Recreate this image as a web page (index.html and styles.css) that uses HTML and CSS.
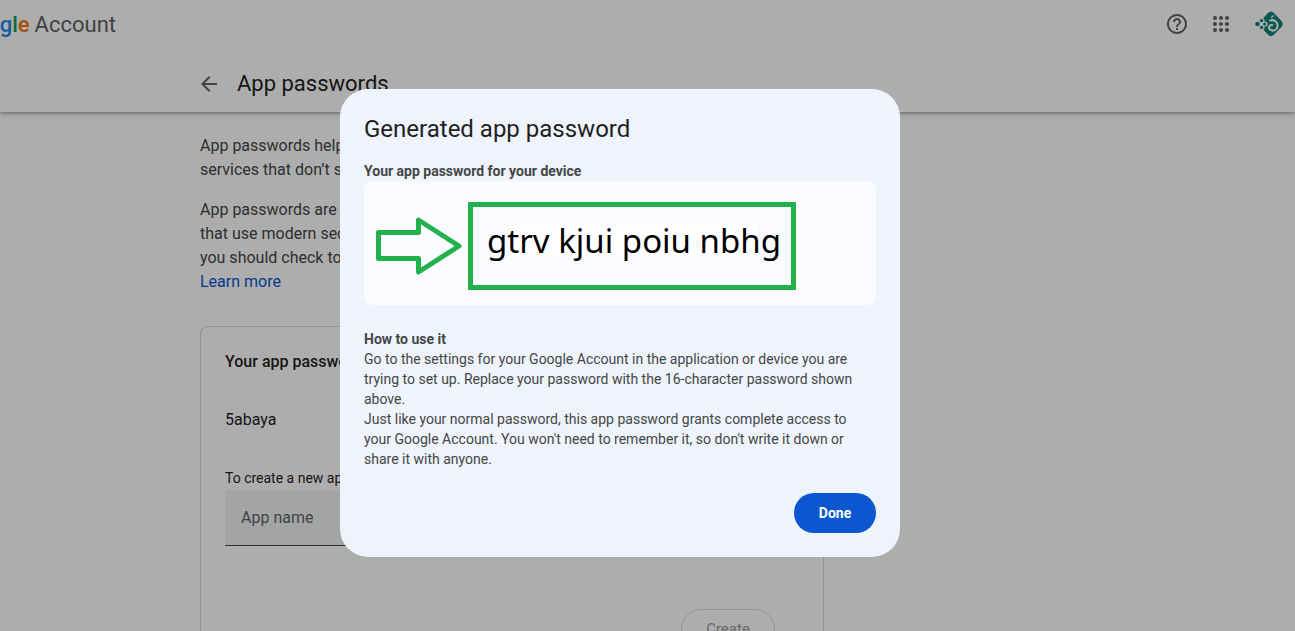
FILE: index.html
```html
<!DOCTYPE html>
<html lang="en">
<head>
  <meta charset="UTF-8">
  <meta name="viewport" content="width=device-width, initial-scale=1.0">
  <title>App passwords</title>
  <link rel="stylesheet" href="styles.css">
</head>
<body>
  <header>
    <div class="topbar">
      <div class="brand">
        <span class="logo"><span class="yellow">o</span><span class="blue">g</span><span class="green">l</span><span class="orange">e</span></span>
        <span>Account</span>
      </div>
      <div class="top-icons">
        <button class="icon-btn" aria-label="Help">
          <svg width="24" height="24" viewBox="0 0 24 24" fill="#5f6368"><path d="M11 18h2v-2h-2v2zm1-16C6.480 2 2 6.480 2 12s4.480 10 10 10 10-4.480 10-10S17.520 2 12 2zm0 18c-4.410 0-8-3.590-8-8s3.590-8 8-8 8 3.590 8 8-3.590 8-8 8zm0-14c-2.210 0-4 1.790-4 4h2c0-1.100.9-2 2-2s2 .9 2 2c0 2-3 1.750-3 5h2c0-2.250 3-2.500 3-5 0-2.210-1.790-4-4-4z"/></svg>
        </button>
        <button class="icon-btn" aria-label="Google apps">
          <svg width="24" height="24" viewBox="0 0 24 24" fill="#5f6368"><circle cx="6" cy="6" r="2"/><circle cx="12" cy="6" r="2"/><circle cx="18" cy="6" r="2"/><circle cx="6" cy="12" r="2"/><circle cx="12" cy="12" r="2"/><circle cx="18" cy="12" r="2"/><circle cx="6" cy="18" r="2"/><circle cx="12" cy="18" r="2"/><circle cx="18" cy="18" r="2"/></svg>
        </button>
        <button class="icon-btn" aria-label="Profile">
          <svg width="32" height="32" viewBox="0 0 32 32">
            <path d="M15 5Q18 2 21 5L28.500 13Q31 16 28.500 19L21 26.500Q18 30 15 26.500L8.500 20L12 16L8.500 12Z" fill="#0e8478"/>
            <circle cx="4.500" cy="16" r="2.300" fill="#0e8478"/>
            <circle cx="8.700" cy="12.600" r="2.800" fill="#fff"/>
            <circle cx="8.700" cy="19.400" r="2.800" fill="#fff"/>
            <circle cx="12" cy="16" r="2.600" fill="#fff"/>
            <g fill="#0e8478"><circle cx="8.600" cy="12.600" r="1.700"/><circle cx="8.600" cy="19.400" r="1.700"/><circle cx="11.600" cy="16" r="1.500"/></g>
            <path d="M17.500 12.500C22 11 25 14.500 24.500 18.500C24 22.500 19 24 16.500 21C15 18.500 17 16.300 20 17.300" fill="none" stroke="#fff" stroke-width="2"/>
            <path d="M18 9.500l3-2M16 13l4-2" stroke="#fff" stroke-width="1.300"/>
          </svg>
        </button>
      </div>
    </div>
    <div class="title-row">
      <a href="#" class="back" aria-label="Back">
        <svg width="24" height="24" viewBox="0 0 24 24" fill="#5f6368"><path d="M20 11H7.830l5.590-5.590L12 4l-8 8 8 8 1.410-1.410L7.830 13H20v-2z"/></svg>
      </a>
      <h1>App passwords</h1>
    </div>
  </header>

  <main>
    <p>App passwords help you sign into your Google Account on older apps and<br>services that don’t support modern security standards.</p>
    <p>App passwords are less secure than using up-to-date apps and services<br>that use modern security standards. Before you create an app password,<br>you should check to see if your app needs this in order to sign in.<br><a href="#">Learn more</a></p>

    <section class="card">
      <h2>Your app passwords</h2>
      <div class="app-item">5abaya</div>
      <label for="appname">To create a new app specific password, type a name for it below…</label>
      <input type="text" id="appname" placeholder="App name">
      <div class="card-actions">
        <button class="create-btn" disabled>Create</button>
      </div>
    </section>
  </main>

  <div class="overlay">
    <div class="dialog" role="dialog" aria-labelledby="dialog-title">
      <h2 id="dialog-title">Generated app password</h2>
      <h3>Your app password for your device</h3>
      <div class="pw-panel">
        <svg class="arrow" width="86" height="58" viewBox="0 0 86 58"><path d="M2.500 15.500H42.500V3L83 29L42.500 55V41.500H2.500Z" fill="none" stroke="#22b14c" stroke-width="5" stroke-linejoin="round"/></svg>
        <div class="pw-box"><span>gtrv kjui poiu nbhg</span></div>
      </div>
      <h3>How to use it</h3>
      <div class="help-text">
        Go to the settings for your Google Account in the application or device you are<br>
        trying to set up. Replace your password with the 16-character password shown<br>
        above.<br>
        Just like your normal password, this app password grants complete access to<br>
        your Google Account. You won't need to remember it, so don't write it down or<br>
        share it with anyone.
      </div>
      <div class="dialog-actions">
        <button class="done-btn">Done</button>
      </div>
    </div>
  </div>
</body>
</html>
```
FILE: styles.css
```css
* {
  box-sizing: border-box;
}
body {
  margin: 0;
  height: 100vh;
  overflow: hidden;
  font-family: Roboto, "Liberation Sans", sans-serif;
  font-size: 16px;
  line-height: 24px;
  color: #444746;
  background-color: #fff;
}
h1, h2, h3, p {
  margin: 0;
  font-weight: 400;
}
button {
  font-family: inherit;
  cursor: pointer;
}
header {
  height: 112px;
  box-shadow: 0 1px 3px rgba(60, 64, 67, 0.4), 0 2px 6px rgba(60, 64, 67, 0.2);
}
.topbar {
  display: flex;
  justify-content: space-between;
  align-items: center;
  height: 48px;
  padding-right: 10px;
}
.brand {
  display: flex;
  justify-content: flex-end;
  gap: 5px;
  width: 116px;
  padding-top: 2px;
  overflow: hidden;
  font-size: 22px;
  line-height: 32px;
  color: #5f6368;
}
.logo {
  font-weight: 500;
}
.blue { color: #1a88f0; }
.yellow { color: #fbbc05; }
.green { color: #0f9d58; }
.orange { color: #f07a13; }
.top-icons {
  display: flex;
  align-items: center;
  gap: 20px;
}
.icon-btn {
  display: flex;
  padding: 0;
  border: none;
  background: none;
}
.title-row {
  display: flex;
  align-items: center;
  gap: 16px;
  height: 64px;
  padding: 8px 0 0 197px;
}
.back {
  display: flex;
}
.title-row h1 {
  font-size: 22px;
  line-height: 32px;
  color: #1f1f1f;
}
main {
  width: 624px;
  margin-left: 200px;
  padding-top: 22px;
}
main p {
  margin-bottom: 16px;
}
a {
  color: #0b57d0;
  text-decoration: none;
}
.card {
  margin-top: 32px;
  padding: 23px 24px;
  border: 1px solid #d5d7d6;
  border-radius: 8px;
}
.card h2 {
  font-size: 16px;
  font-weight: 500;
  color: #1f1f1f;
}
.app-item {
  padding: 34px 0 35px;
  color: #1f1f1f;
}
.card label {
  display: block;
  font-size: 14px;
  line-height: 23px;
  color: #1f1f1f;
}
.card input {
  display: block;
  width: 100%;
  height: 56px;
  padding: 0 16px;
  border: none;
  border-bottom: 1px solid #444746;
  border-radius: 4px 4px 0 0;
  background-color: #f1f4f3;
  font-family: inherit;
  font-size: 16px;
}
.card input::placeholder {
  color: #5f6368;
}
.card-actions {
  display: flex;
  justify-content: flex-end;
  padding: 63px 24px 0 0;
}
.create-btn {
  width: 94px;
  height: 40px;
  border: 1px solid #d5d7d6;
  border-radius: 20px;
  background: none;
  font-size: 15px;
  color: #9a9a9a;
}

/* dialog */
.overlay {
  position: fixed;
  inset: 0;
  display: flex;
  align-items: center;
  justify-content: center;
  padding: 15px 55px 0 0;
  background-color: rgba(0, 0, 0, 0.32);
}
.dialog {
  width: 560px;
  padding: 24px;
  border-radius: 28px;
  background-color: #eef3fc;
  font-size: 14px;
  line-height: 20px;
}
.dialog h2 {
  margin-bottom: 16px;
  font-size: 24px;
  line-height: 32px;
  color: #1f1f1f;
}
.dialog h3 {
  font-size: 14px;
  font-weight: 700;
}
.pw-panel {
  display: flex;
  align-items: center;
  gap: 6px;
  height: 124px;
  margin-bottom: 24px;
  padding: 6px 12px 0;
  border-radius: 8px;
  background-color: #f9fbff;
}
.arrow {
  flex-shrink: 0;
}
.pw-box {
  display: flex;
  align-items: center;
  justify-content: center;
  width: 328px;
  height: 88px;
  padding: 0 0 10px 4px;
  border: 5px solid #22b14c;
  font-family: "Noto Sans", sans-serif;
  font-size: 33px;
  line-height: 32px;
  color: #000;
  white-space: nowrap;
}
.pw-box span {
  background: linear-gradient(#fff, #fff) center / 84% 32px no-repeat;
}
.dialog-actions {
  display: flex;
  justify-content: flex-end;
  padding-top: 24px;
}
.done-btn {
  width: 82px;
  height: 40px;
  border: none;
  border-radius: 20px;
  background-color: #0b57d0;
  color: #fff;
  font-size: 14px;
  font-weight: 700;
}
```
